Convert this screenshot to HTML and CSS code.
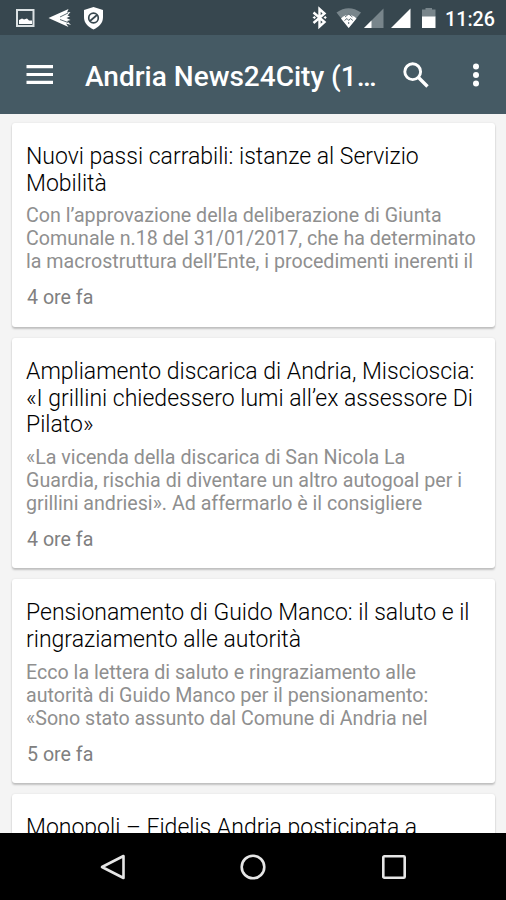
FILE: index.html
```html
<!DOCTYPE html>
<html lang="it">
<head>
    <meta charset="UTF-8">
    <meta name="viewport" content="width=device-width, initial-scale=1.0">
    <title>Andria News24City</title>
    <link rel="stylesheet" href="styles.css">
</head>
<body>
    <div class="screen">
        <div class="status-bar">
            <svg class="status-left" width="110" height="35" viewBox="0 0 110 35">
                <path fill="#dce2e4" fill-rule="evenodd" d="M16 9h18.500v18H16zM18 11v14h14.500V11z"/>
                <path fill="#fff" d="M19 24v-4l3-1.500 2 1 3-1 2 2h3V24z"/>
                <path fill="#fff" d="M48.500 18l20-9-1.500 3.500 3.500-.5-3 3.500 2.500 1-3.500 1.500 4 2-3.500 1 4 4-5-1.500 2.500 3.500z"/>
                <path stroke="#5b6b72" stroke-width="1" fill="none" d="M60 17l8-4M60 19.500l8 3"/>
                <path fill="#fff" d="M93.500 7l9.500 3v7c0 6-4 10-9.500 12.500C88 27 84 23 84 17v-7z"/>
                <circle cx="93.500" cy="18" r="4.800" fill="none" stroke="#37474f" stroke-width="1.700"/>
                <path stroke="#37474f" stroke-width="1.700" d="M90 21l7-6"/>
            </svg>
            <svg class="status-right" width="130" height="35" viewBox="310 0 130 35">
                <path fill="none" stroke="#fff" stroke-width="2.400" d="M313.500 12.500l11 9.500L319.500 26.500V9l5 4.500-11 9.500"/>
                <path fill="#fff" d="M312.500 17.500l2-1.500 1.500 1.500-1.500 1.500zM323.500 17.500l1.800-1.500 1.500 1.500-1.500 1.500z"/>
                <path fill="#78858b" d="M336.500 12.500Q348.500 4 361 12.500L348.700 28z"/>
                <path fill="#fff" d="M341 18.500Q348.500 11 356.500 18.500L348.700 28z"/>
                <path fill="none" stroke="#63727a" stroke-width="1" d="M345 17l3.700-3 3.700 3M344.500 20.500l2.500-2 1.700 2 1.700-2 2.500 2M348.700 22v2"/>
                <path fill="#78858b" d="M383.500 8.500V28H364z"/>
                <path fill="#fff" d="M371.500 20.500V28H364z"/>
                <path fill="#fff" d="M410.500 8.500V28H391z"/>
                <path fill="#78858b" d="M422 9.500h3.500V8h6.500v1.500h3.500V17H422z"/>
                <path fill="#fff" d="M422 16.500h13.500v11.500H422z"/>
            </svg>
            <span class="clock">11:26</span>
        </div>

        <div class="toolbar">
            <svg class="menu-icon" width="28" height="20" viewBox="0 0 28 20">
                <path fill="#fff" d="M0.500 0H27v3.200H0.500zM0.500 7.900H27v3.200H0.500zM0.500 15.800H27V19H0.500z"/>
            </svg>
            <h1 class="toolbar-title">Andria News24City (1…</h1>
            <svg class="search-icon" width="26" height="26" viewBox="0 0 26 26">
                <circle cx="9.700" cy="9.700" r="7.900" fill="none" stroke="#fff" stroke-width="2.900"/>
                <path stroke="#fff" stroke-width="3.400" d="M15.500 15.500l9 9"/>
            </svg>
            <svg class="more-icon" width="8" height="24" viewBox="0 0 8 24">
                <circle cx="4" cy="3.500" r="3" fill="#fff"/>
                <circle cx="4" cy="12" r="3" fill="#fff"/>
                <circle cx="4" cy="20.500" r="3" fill="#fff"/>
            </svg>
        </div>

        <div class="news-list">
            <div class="card">
                <h2 class="card-title">Nuovi passi carrabili: istanze al Servizio<br>Mobilità</h2>
                <p class="card-text">Con l’approvazione della deliberazione di Giunta<br>Comunale n.18 del 31/01/2017, che ha determinato<br>la macrostruttura dell’Ente, i procedimenti inerenti il</p>
                <span class="card-time">4 ore fa</span>
            </div>

            <div class="card">
                <h2 class="card-title">Ampliamento discarica di Andria, Miscioscia:<br>«I grillini chiedessero lumi all’ex assessore Di<br>Pilato»</h2>
                <p class="card-text">«La vicenda della discarica di San Nicola La<br>Guardia, rischia di diventare un altro autogoal per i<br>grillini andriesi». Ad affermarlo è il consigliere</p>
                <span class="card-time">4 ore fa</span>
            </div>

            <div class="card">
                <h2 class="card-title">Pensionamento di Guido Manco: il saluto e il<br>ringraziamento alle autorità</h2>
                <p class="card-text">Ecco la lettera di saluto e ringraziamento alle<br>autorità di Guido Manco per il pensionamento:<br>«Sono stato assunto dal Comune di Andria nel</p>
                <span class="card-time">5 ore fa</span>
            </div>

            <div class="card">
                <h2 class="card-title">Monopoli – Fidelis Andria posticipata a</h2>
            </div>
        </div>

        <div class="nav-bar">
            <svg width="28" height="28" viewBox="0 0 28 28">
                <path d="M24.500 3v22L3 14z"/>
            </svg>
            <svg width="28" height="28" viewBox="0 0 28 28">
                <circle cx="14" cy="14" r="11.300"/>
            </svg>
            <svg width="28" height="28" viewBox="0 0 28 28">
                <rect x="3.300" y="3.300" width="21.400" height="21.400" rx="1"/>
            </svg>
        </div>
    </div>
</body>
</html>
```
FILE: styles.css
```css
* {
    margin: 0;
    padding: 0;
    box-sizing: border-box;
}

body {
    font-family: Roboto, "Liberation Sans", sans-serif;
    background-color: #f4f4f4;
}

.screen {
    width: 506px;
    height: 900px;
    display: flex;
    flex-direction: column;
    overflow: hidden;
}

.status-bar {
    height: 35px;
    flex: none;
    display: flex;
    align-items: center;
    background-color: #37474f;
}

.status-right {
    margin-left: 200px;
}

.clock {
    margin-left: 5px;
    padding-top: 3px;
    font-size: 19.7px;
    font-weight: 500;
    color: #fff;
    white-space: nowrap;
}

.toolbar {
    height: 79px;
    flex: none;
    display: flex;
    align-items: center;
    padding: 0 26px;
    background-color: #455a64;
    color: #fff;
}

.toolbar-title {
    width: 295px;
    margin-left: 31px;
    padding-top: 4px;
    font-size: 28px;
    font-weight: 500;
    white-space: nowrap;
}

.search-icon {
    margin-left: 23px;
}

.more-icon {
    margin-left: 43px;
    flex: none;
}

.news-list {
    flex: 1;
    min-height: 0;
    overflow: hidden;
    padding: 9px 11px 0 12px;
}

.card {
    margin-bottom: 11px;
    padding: 21px 14px 16.4px;
    background-color: #fff;
    border-radius: 3px;
    box-shadow: 0 2px 2px rgba(0, 0, 0, 0.2), 0 0 2px rgba(0, 0, 0, 0.1);
}

.card-title {
    font-size: 23px;
    font-weight: 300;
    line-height: 26.7px;
    color: #000;
    white-space: nowrap;
}

.card-text {
    margin-top: 7px;
    font-size: 19.65px;
    line-height: 23px;
    color: #8f8f8f;
    white-space: nowrap;
}

.card-time {
    display: block;
    margin: 13px 0 0 1px;
    font-size: 19.65px;
    line-height: 24px;
    color: #808080;
}

.nav-bar {
    height: 67px;
    flex: none;
    display: flex;
    justify-content: center;
    align-items: center;
    gap: 112.5px;
    background-color: #000;
}

.nav-bar svg {
    fill: none;
    stroke: #e6e6e6;
    stroke-width: 2.6;
    stroke-linejoin: round;
}
```
